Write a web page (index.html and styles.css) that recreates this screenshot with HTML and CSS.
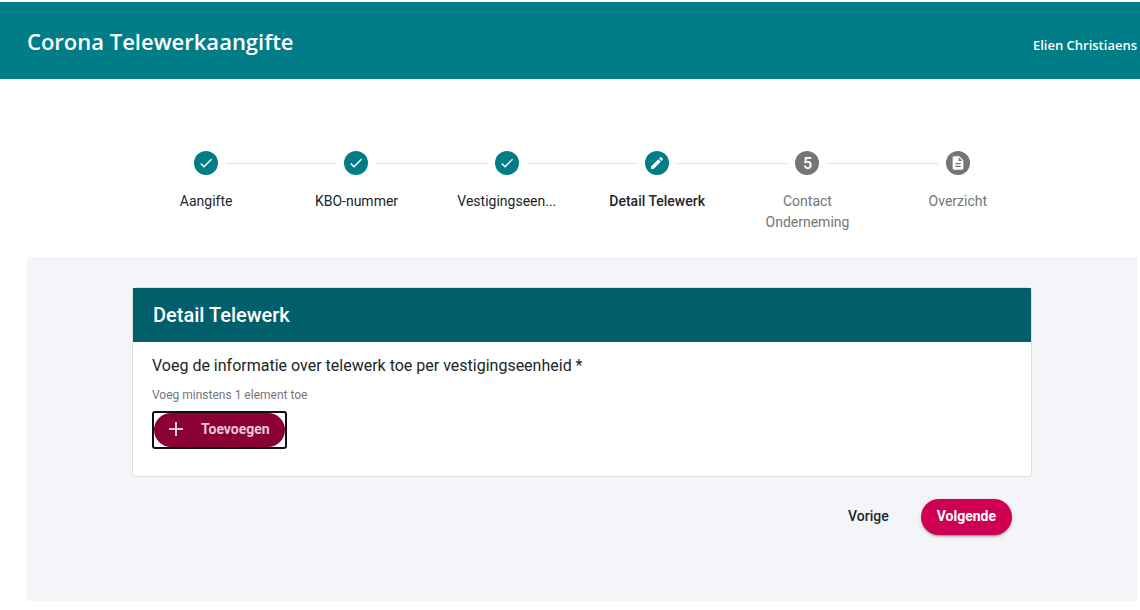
FILE: index.html
```html
<!DOCTYPE html>
<html lang="nl">
<head>
    <meta charset="UTF-8">
    <meta name="viewport" content="width=device-width, initial-scale=1.0">
    <title>Corona Telewerkaangifte</title>
    <link rel="stylesheet" href="styles.css">
</head>
<body>
    <header class="header">
        <h1>Corona Telewerkaangifte</h1>
        <span class="user">Elien Christiaens</span>
    </header>
    <div class="page">
        <ol class="stepper">
            <li class="step done">
                <span class="step-icon">
                    <svg viewBox="0 0 24 24"><path d="M9 16.17L4.83 12l-1.42 1.41L9 19 21 7l-1.41-1.41z"/></svg>
                </span>
                <span class="step-label">Aangifte</span>
            </li>
            <li class="step done">
                <span class="step-icon">
                    <svg viewBox="0 0 24 24"><path d="M9 16.17L4.83 12l-1.42 1.41L9 19 21 7l-1.41-1.41z"/></svg>
                </span>
                <span class="step-label">KBO-nummer</span>
            </li>
            <li class="step done">
                <span class="step-icon">
                    <svg viewBox="0 0 24 24"><path d="M9 16.17L4.83 12l-1.42 1.41L9 19 21 7l-1.41-1.41z"/></svg>
                </span>
                <span class="step-label">Vestigingseen...</span>
            </li>
            <li class="step active" aria-current="step">
                <span class="step-icon">
                    <svg viewBox="0 0 24 24"><path d="M3 17.25V21h3.75L17.81 9.94l-3.75-3.75L3 17.25zM20.71 7.04c.39-.39.39-1.02 0-1.41l-2.34-2.34c-.39-.39-1.02-.39-1.41 0l-1.83 1.83 3.75 3.75 1.83-1.83z"/></svg>
                </span>
                <span class="step-label">Detail Telewerk</span>
            </li>
            <li class="step">
                <span class="step-icon">5</span>
                <span class="step-label">Contact Onderneming</span>
            </li>
            <li class="step">
                <span class="step-icon">
                    <svg viewBox="0 0 24 24"><path d="M14 2H6c-1.1 0-1.99.9-1.99 2L4 20c0 1.1.89 2 1.99 2H18c1.1 0 2-.9 2-2V8l-6-6zm2 16H8v-2h8v2zm0-4H8v-2h8v2zm-3-5V3.500L18.500 9H13z"/></svg>
                </span>
                <span class="step-label">Overzicht</span>
            </li>
        </ol>
        <main class="panel">
            <div class="content">
                <section class="card">
                    <h2>Detail Telewerk</h2>
                    <div class="card-body">
                        <p class="question">Voeg de informatie over telewerk toe per vestigingseenheid *</p>
                        <p class="hint">Voeg minstens 1 element toe</p>
                        <button type="button" class="add-button">
                            <span class="btn btn-add">
                                <svg viewBox="0 0 24 24"><path d="M19 13h-6v6h-2v-6H5v-2h6V5h2v6h6v2z"/></svg>
                                Toevoegen
                            </span>
                        </button>
                    </div>
                </section>
                <div class="actions">
                    <button type="button" class="btn btn-plain">Vorige</button>
                    <button type="button" class="btn btn-primary">Volgende</button>
                </div>
            </div>
        </main>
    </div>
</body>
</html>
```

FILE: styles.css
```css
* {
    box-sizing: border-box;
}
body {
    font-family: Roboto, Arial, sans-serif;
    font-size: 14px;
    color: #212529;
    background: #fff;
    margin: 0;
    padding-top: 2px;
}
h1, h2, p {
    margin: 0;
}
.header {
    display: flex;
    align-items: center;
    justify-content: space-between;
    background: #007d87;
    color: #fff;
    padding: 19px 3px 18px 27px;
    font-family: "Segoe UI", "Open Sans", sans-serif;
}
.header h1 {
    font-size: 22px;
    font-weight: 600;
    line-height: 40px;
}
.user {
    font-size: 13px;
    font-weight: 600;
    line-height: 20px;
    padding-top: 8px;
}
.page {
    padding: 0 3px 0 27px;
}

/* Stepper */
.stepper {
    display: flex;
    list-style: none;
    max-width: 902px;
    margin: 0 auto;
    padding: 72px 0 24px;
}
.step {
    flex: 1;
    display: grid;
    grid-template-columns: 1fr 24px 1fr;
    column-gap: 8px;
    row-gap: 16px;
    align-items: center;
    align-content: start;
    justify-items: center;
    color: #757575;
}
.step::before,
.step::after {
    content: "";
    width: 100%;
    border-top: 1px solid #e0e0e0;
    grid-row: 1;
}
.step::before {
    grid-column: 1;
}
.step::after {
    grid-column: 3;
}
.step:first-child::before,
.step:last-child::after {
    border-color: transparent;
}
.step-icon {
    grid-column: 2;
    grid-row: 1;
    display: flex;
    align-items: center;
    justify-content: center;
    width: 24px;
    height: 24px;
    border-radius: 50%;
    background: #757575;
    color: #fff;
    font-size: 16px;
    font-weight: 500;
}
.step-icon svg {
    width: 16px;
    height: 16px;
    fill: currentColor;
}
.step-label {
    grid-column: 1 / -1;
    max-width: 100px;
    line-height: 21px;
    text-align: center;
}
.step.done,
.step.active {
    color: #212529;
}
.step.done .step-icon,
.step.active .step-icon {
    background: #007d87;
}
.step.active .step-label {
    font-weight: 500;
}

/* Form */
.panel {
    background: #f3f5f9;
    padding: 30px 20px 66px;
}
.content {
    max-width: 900px;
    margin: 0 auto;
}
.card {
    background: #fff;
    border: 1px solid #dcdfe0;
    border-radius: 4px;
}
.card h2 {
    background: #005f6b;
    color: #fff;
    font-size: 20px;
    font-weight: 500;
    line-height: 24px;
    padding: 15px 20px;
}
.card-body {
    padding: 12px 19px 27px;
}
.question {
    font-size: 16px;
    line-height: 24px;
}
.hint {
    font-size: 12px;
    line-height: 18px;
    color: #757575;
    margin: 8px 0 7px;
}
.btn {
    display: flex;
    align-items: center;
    height: 36px;
    padding: 0 16px 2px;
    border: none;
    border-radius: 18px;
    font-family: inherit;
    font-size: 14px;
    font-weight: 500;
    cursor: pointer;
}
/* square focus ring around the rounded button */
.add-button {
    background: #fff;
    border: 2px solid #101010;
    border-radius: 3px;
    padding: 0;
    font-family: inherit;
}
.btn-add {
    gap: 13px;
    height: 34px;
    padding: 0 15px 2px 10px;
    background: #8a0034;
    color: #e6ccd6;
    font-weight: 700;
}
.btn-add svg {
    width: 24px;
    height: 24px;
    fill: currentColor;
}
.actions {
    display: flex;
    justify-content: flex-end;
    gap: 16px;
    padding: 22px 20px 0;
}
.btn-plain {
    background: transparent;
    color: #212529;
}
.btn-primary {
    background: #cf0052;
    color: #fff;
    font-weight: 700;
    box-shadow: 0 3px 1px -2px rgba(0, 0, 0, 0.2), 0 2px 2px rgba(0, 0, 0, 0.14), 0 1px 5px rgba(0, 0, 0, 0.12);
}
```
